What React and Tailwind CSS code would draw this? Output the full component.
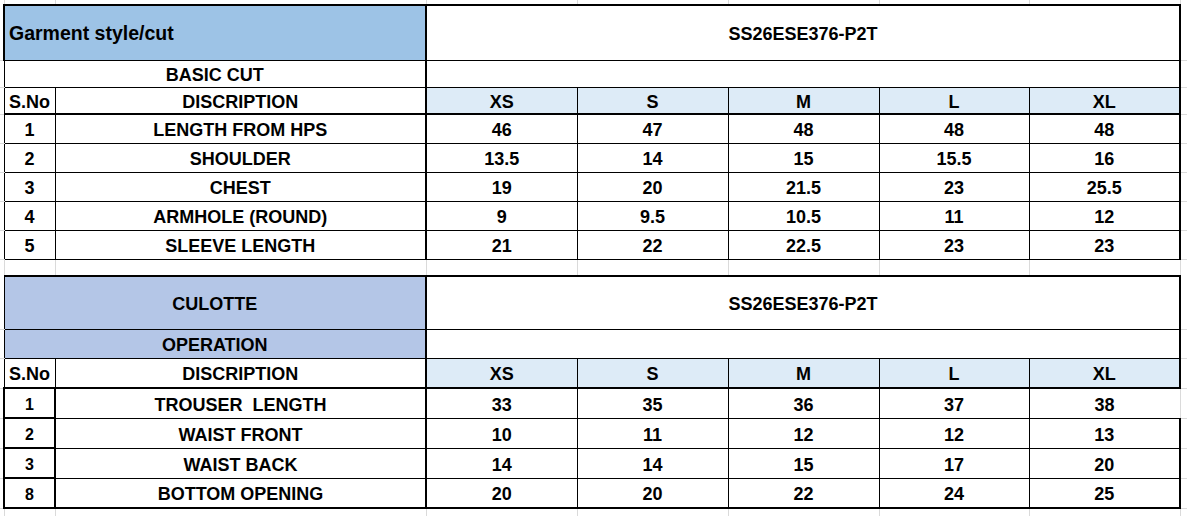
import React from "react";

// size chart sheet, spreadsheet look
const SIZES = ["XS", "S", "M", "L", "XL"];

const TOP_ROWS = [
  { no: "1", name: "LENGTH FROM HPS", vals: ["46", "47", "48", "48", "48"], h: "h-[29px]" },
  { no: "2", name: "SHOULDER", vals: ["13.5", "14", "15", "15.5", "16"], h: "h-[29px]" },
  { no: "3", name: "CHEST", vals: ["19", "20", "21.5", "23", "25.5"], h: "h-[29px]" },
  { no: "4", name: "ARMHOLE (ROUND)", vals: ["9", "9.5", "10.5", "11", "12"], h: "h-[29px]" },
  { no: "5", name: "SLEEVE LENGTH", vals: ["21", "22", "22.5", "23", "23"], h: "h-[29px]" },
];

const BOTTOM_ROWS = [
  { no: "1", name: "TROUSER\u00a0 LENGTH", vals: ["33", "35", "36", "37", "38"] },
  { no: "2", name: "WAIST FRONT", vals: ["10", "11", "12", "12", "13"] },
  { no: "3", name: "WAIST BACK", vals: ["14", "14", "15", "17", "20"] },
  { no: "8", name: "BOTTOM OPENING", vals: ["20", "20", "22", "24", "25"] },
];

const cell = "border border-black text-center align-middle pt-[3px] px-0";
const edge = "border-b border-[#dadada] p-0";

function GridRow({ h }) {
  return (
    <tr className={h}>
      <td className="border-r border-[#dadada] p-0"></td>
      <td className="border-r border-[#dadada] p-0"></td>
      <td className="border-r border-[#dadada] p-0"></td>
      <td className="border-r border-[#dadada] p-0"></td>
      <td className="border-r border-[#dadada] p-0"></td>
      <td className="border-r border-[#dadada] p-0"></td>
      <td className="border-r border-[#dadada] p-0"></td>
      <td className="border-r border-[#dadada] p-0"></td>
      <td className="p-0"></td>
    </tr>
  );
}

function SizeHeader({ h }) {
  return (
    <tr className={h}>
      <td className={edge}></td>
      <td className={cell + " border-b-2"}>S.No</td>
      <td className={cell + " border-b-2 border-r-2"}>DISCRIPTION</td>
      {SIZES.map((s, i) => (
        <td
          key={s}
          className={cell + " border-b-2 bg-[#ddebf7]" + (i === 4 ? " border-r-2" : "")}
        >
          {s}
        </td>
      ))}
      <td className={edge}></td>
    </tr>
  );
}

export default function App() {
  return (
    <div className="w-[1187px] h-[516px] overflow-hidden bg-white text-black font-bold text-[18px] leading-none font-['Liberation_Sans',Arial,sans-serif]">
      <table className="table-fixed border-collapse w-[1187px]">
        <colgroup>
          <col className="w-[4px]" />
          <col className="w-[51px]" />
          <col className="w-[371px]" />
          <col className="w-[151px]" />
          <col className="w-[151px]" />
          <col className="w-[151px]" />
          <col className="w-[150px]" />
          <col className="w-[151px]" />
          <col className="w-[7px]" />
        </colgroup>
        <tbody>
          <GridRow h="h-[5px]" />

          {/* garment block */}
          <tr className="h-[55px]">
            <td className={edge}></td>
            <td
              colSpan={2}
              className="border border-black border-t-2 border-l-2 border-r-2 bg-[#9dc3e6] text-left align-middle pl-[4px] pt-[1px] text-[19.5px]"
            >
              Garment style/cut
            </td>
            <td colSpan={5} className={cell + " border-t-2 border-r-2"}>
              SS26ESE376-P2T
            </td>
            <td className={edge}></td>
          </tr>
          <tr className="h-[27px]">
            <td className={edge}></td>
            <td colSpan={2} className={cell + " border-r-2"}>
              BASIC CUT
            </td>
            <td colSpan={5} className={cell + " border-r-2"}></td>
            <td className={edge}></td>
          </tr>
          <SizeHeader h="h-[27px]" />
          {TOP_ROWS.map((r) => (
            <tr key={r.name} className={r.h}>
              <td className={edge}></td>
              <td className={cell}>{r.no}</td>
              <td className={cell + " border-r-2"}>{r.name}</td>
              {r.vals.map((v, i) => (
                <td key={i} className={cell + (i === 4 ? " border-r-2" : "")}>
                  {v}
                </td>
              ))}
              <td className={edge}></td>
            </tr>
          ))}

          <GridRow h="h-[17px]" />

          {/* culotte block */}
          <tr className="h-[53px]">
            <td className={edge}></td>
            <td colSpan={2} className={cell + " border-t-2 border-r-2 bg-[#b4c6e7]"}>
              CULOTTE
            </td>
            <td colSpan={5} className={cell + " border-t-2 border-r-2"}>
              SS26ESE376-P2T
            </td>
            <td className={edge}></td>
          </tr>
          <tr className="h-[29px]">
            <td className={edge}></td>
            <td colSpan={2} className={cell + " border-r-2 bg-[#b4c6e7]"}>
              OPERATION
            </td>
            <td colSpan={5} className={cell + " border-r-2"}></td>
            <td className={edge}></td>
          </tr>
          <SizeHeader h="h-[30px]" />
          {BOTTOM_ROWS.map((r, idx) => {
            const last = idx === BOTTOM_ROWS.length - 1;
            return (
              <tr key={r.name} className="h-[30px]">
                <td className={edge}></td>
                <td className={cell + " border-2 text-[16px]"}>{r.no}</td>
                <td className={cell + " border-r-2" + (last ? " border-b-2" : "")}>{r.name}</td>
                {r.vals.map((v, i) => (
                  <td
                    key={i}
                    className={
                      cell +
                      (last ? " border-b-2" : "") +
                      (i === 4 ? (idx === 0 ? " border-r-[#dadada]" : " border-r-2") : "")
                    }
                  >
                    {v}
                  </td>
                ))}
                <td className={edge}></td>
              </tr>
            );
          })}

          <GridRow h="h-[10px]" />
        </tbody>
      </table>
    </div>
  );
}
